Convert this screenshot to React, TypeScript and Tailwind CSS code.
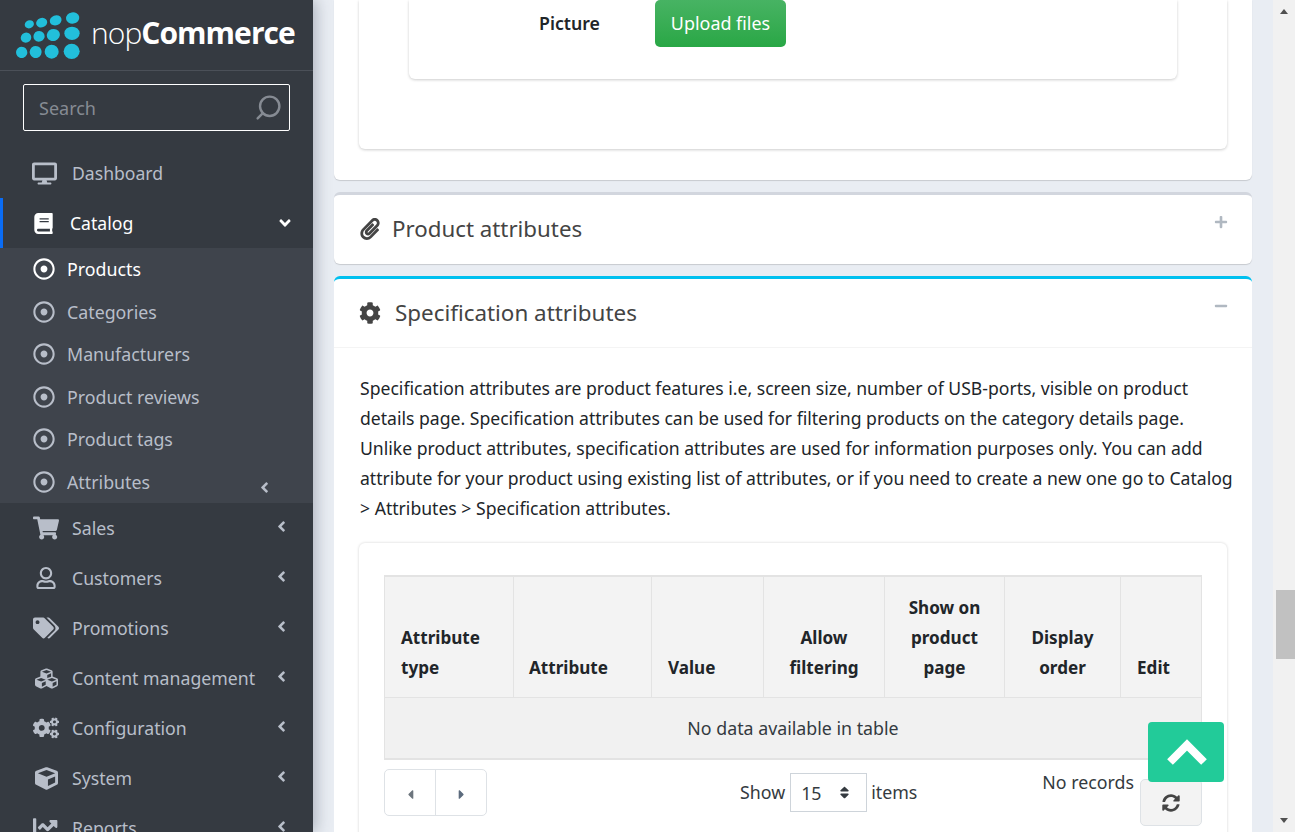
import { Search } from 'lucide-react'
import {
  FaAngleDown,
  FaAngleLeft,
  FaBook,
  FaCaretLeft,
  FaCaretRight,
  FaChartLine,
  FaCog,
  FaCogs,
  FaCube,
  FaCubes,
  FaDesktop,
  FaMinus,
  FaPaperclip,
  FaPlus,
  FaRegDotCircle,
  FaRegUser,
  FaShoppingCart,
  FaSort,
  FaSyncAlt,
  FaTags,
} from 'react-icons/fa'

const subItems = ['Products', 'Categories', 'Manufacturers', 'Product reviews', 'Product tags', 'Attributes']

const menuItems = [
  { label: 'Sales', icon: FaShoppingCart },
  { label: 'Customers', icon: FaRegUser },
  { label: 'Promotions', icon: FaTags },
  { label: 'Content management', icon: FaCubes },
  { label: 'Configuration', icon: FaCogs },
  { label: 'System', icon: FaCube },
  { label: 'Reports', icon: FaChartLine },
]

const Logo = () => (
  <svg viewBox="0 0 330 210" className="h-[70px] w-[110px] shrink-0" fill="#22bfdb">
    <ellipse cx="88" cy="73" rx="14" ry="12" transform="rotate(-20 88 73)" />
    <ellipse cx="125" cy="68" rx="17" ry="14" transform="rotate(-20 125 68)" />
    <ellipse cx="167" cy="61" rx="18" ry="15" transform="rotate(-20 167 61)" />
    <ellipse cx="218" cy="54" rx="20" ry="17" transform="rotate(-10 218 54)" />
    <ellipse cx="78" cy="113" rx="16" ry="15" transform="rotate(-20 78 113)" />
    <ellipse cx="117" cy="109" rx="17" ry="16" transform="rotate(-20 117 109)" />
    <ellipse cx="160" cy="105" rx="20" ry="18" transform="rotate(-20 160 105)" />
    <ellipse cx="216" cy="100" rx="23" ry="20" />
    <ellipse cx="65" cy="157" rx="17" ry="17" transform="rotate(-20 65 157)" />
    <ellipse cx="107" cy="156" rx="18" ry="18" transform="rotate(-20 107 156)" />
    <ellipse cx="155" cy="155" rx="21" ry="21" />
    <ellipse cx="215" cy="154" rx="24" ry="23" />
  </svg>
)

const Sidebar = () => (
  <aside className="relative z-10 flex h-full w-[313px] shrink-0 flex-col overflow-hidden bg-[#353a41] shadow-[3px_0_14px_rgba(60,70,90,0.35)]">
    <div className="flex h-[71px] shrink-0 items-center border-b border-[#4b5058]">
      <Logo />
      <span className="-ml-[19px] -mt-[5px] text-[30px] leading-none tracking-[-0.95px] text-white font-['Open_Sans',sans-serif]">
        <span className="font-light">nop</span>
        <span className="font-bold">Commerce</span>
      </span>
    </div>
    <div className="mx-[23px] mt-[13px] flex h-[47px] shrink-0 items-center justify-between rounded-[2px] border border-white pl-[15px] pr-[6px]">
      <span className="pt-[1px] text-[18px] text-[#868b93]">Search</span>
      <Search size={29} strokeWidth={2} className="-scale-x-100 text-[#868b93]" />
    </div>
    <nav className="mt-[17px]">
      <div className="flex h-[50px] items-center pl-[32px] text-[#b8bec9]">
        <FaDesktop size={25} />
        <span className="ml-[15px] text-[17.6px]">Dashboard</span>
      </div>
      <div className="flex h-[50px] items-center border-l-[3px] border-[#0a6cf5] pl-[30px] pr-[19px] text-white">
        <FaBook size={21} />
        <span className="ml-[16px] flex-1 text-[17.6px]">Catalog</span>
        <FaAngleDown size={18} />
      </div>
      <div className="bg-[#3f444c]">
        {subItems.map((item, i) => (
          <div
            key={item}
            className={`relative flex h-[42.5px] items-center pl-[33px] ${i === 0 ? 'text-white' : 'text-[#b8bec9]'} ${
              i % 2 === 1 ? 'pt-[1px]' : ''
            }`}
          >
            <FaRegDotCircle size={22} />
            <span className="ml-[12px] text-[17.8px]">{item}</span>
            {item === 'Attributes' && <FaAngleLeft size={17} className="absolute left-[256px] top-[18px]" />}
          </div>
        ))}
      </div>
      {menuItems.map(({ label, icon: Icon }) => (
        <div key={label} className="flex h-[50px] items-center pl-[32px] pr-[23px] text-[#b8bec9]">
          <span className="flex w-[28px] justify-center">
            <Icon size={label === 'Customers' ? 22 : label === 'Content management' || label === 'System' ? 23 : 26} />
          </span>
          <span className="ml-[12px] flex-1 text-[17.7px]">{label}</span>
          <FaAngleLeft size={17} className="-mt-[4px]" />
        </div>
      ))}
    </nav>
  </aside>
)

const columns = [
  { lines: ['Attribute', 'type'], width: 129, cls: 'px-[16px] text-left' },
  { lines: ['Attribute'], width: 138, cls: 'px-[15px] text-left' },
  { lines: ['Value'], width: 112, cls: 'px-[16px] text-left' },
  { lines: ['Allow', 'filtering'], width: 121, cls: 'px-[15px] text-center' },
  { lines: ['Show on', 'product', 'page'], width: 120, cls: 'px-[15px] text-center' },
  { lines: ['Display', 'order'], width: 116, cls: 'px-[15px] text-center' },
  { lines: ['Edit'], width: 81, cls: 'px-[16px] text-left' },
]

const SpecTable = () => (
  <table className="w-[817px] table-fixed border-collapse border-t-[2px] border-[#e3e3e3] leading-[30px]">
    <thead>
      <tr className="h-[121px] bg-[#f3f3f3]">
        {columns.map(col => (
          <th
            key={col.lines.join(' ')}
            style={{ width: col.width }}
            className={`border border-t-0 border-[#e3e3e3] pb-[14px] align-bottom text-[17.1px] font-bold text-[#212529] ${col.cls}`}
          >
            {col.lines.map(line => (
              <div key={line}>{line}</div>
            ))}
          </th>
        ))}
      </tr>
    </thead>
    <tbody>
      <tr className="h-[62px] bg-[#f1f1f1]">
        <td colSpan={7} className="border border-b-2 border-[#e3e3e3] text-center text-[17.8px] text-[#343a40]">
          No data available in table
        </td>
      </tr>
    </tbody>
  </table>
)

const Pager = () => (
  <div className="mt-[9px] flex w-[818px] items-start">
    <div className="flex h-[47px] w-[103px] shrink-0 rounded-[5px] border border-[#dee2e6]">
      <span className="flex w-[51px] items-center justify-center border-r border-[#dee2e6] pt-[4px] text-[#6c757d]">
        <FaCaretLeft size={15} />
      </span>
      <span className="flex flex-1 items-center justify-center pt-[4px] text-[#5c6b7d]">
        <FaCaretRight size={15} />
      </span>
    </div>
    <div className="ml-[253px] mt-[4px] flex items-center text-[17.8px] text-[#343a40]">
      <span>Show</span>
      <span className="ml-[5px] mr-[4px] flex h-[39px] w-[77px] items-center justify-between border border-[#ced4da] pl-[10px] pr-[14px]">
        <span className="pt-[2px]">15</span>
        <FaSort size={15} />
      </span>
      <span>items</span>
    </div>
    <span className="ml-[125px] whitespace-nowrap text-[17.8px] text-[#343a40]">No records</span>
    <span className="ml-auto mt-[10px] flex h-[47px] w-[62px] shrink-0 items-center justify-center rounded-[5px] border border-[#dee2e6] bg-[#f3f3f3] text-[#444]">
      <FaSyncAlt size={18} />
    </span>
  </div>
)

const Main = () => (
  <main className="relative h-full flex-1 overflow-hidden bg-[#e9edf3] pl-[21px] pr-[21px]">
    <section className="h-[180px] rounded-b-[6px] bg-white px-[25px] shadow-[0_1px_1px_rgba(0,0,0,0.15)]">
      <div className="h-[149px] rounded-b-[6px] px-[50px] shadow-[0_1px_3px_rgba(0,0,0,0.2)]">
        <div className="h-[79px] rounded-b-[6px] shadow-[0_1px_3px_rgba(0,0,0,0.2)]">
          <div className="flex h-[47px] items-center">
            <span className="ml-[130px] w-[61px] text-[17.7px] font-semibold text-[#212529]">Picture</span>
            <span className="ml-[55px] flex h-[47px] w-[131px] items-center justify-center rounded-[5px] bg-gradient-to-b from-[#47b363] to-[#28a745] text-[17.9px] text-white">
              Upload files
            </span>
          </div>
        </div>
      </div>
    </section>
    <section className="mt-[12px] flex h-[72px] justify-between rounded-[6px] border-t-[3px] border-[#d2d6de] bg-white pl-[25px] pr-[24px] shadow-[0_1px_1px_rgba(0,0,0,0.15)]">
      <div className="flex items-center pb-[1px] text-[#444]">
        <FaPaperclip size={22} />
        <h2 className="ml-[11px] text-[22.3px] font-normal">Product attributes</h2>
      </div>
      <FaPlus size={14} className="mt-[20px] text-[#b0b8c1]" />
    </section>
    <section className="mt-[12px] rounded-t-[6px] border-t-[3px] border-[#00c0ef] bg-white">
      <div className="flex h-[69px] justify-between border-b border-[#f4f4f4] pl-[25px] pr-[24px]">
        <div className="flex items-center pb-[1px] text-[#444]">
          <FaCog size={22} />
          <h2 className="ml-[14px] text-[22.4px] font-normal">Specification attributes</h2>
        </div>
        <FaMinus size={14} className="mt-[20px] text-[#b0b8c1]" />
      </div>
      <p className="mx-[26px] mt-[25px] w-[878px] text-[17.6px] leading-[30px] text-[#212529]">
        Specification attributes are product features i.e, screen size, number of USB-ports, visible on product details
        page. Specification attributes can be used for filtering products on the category details page. Unlike product
        attributes, specification attributes are used for information purposes only. You can add attribute for your
        product using existing list of attributes, or if you need to create a new one go to Catalog &gt; Attributes &gt;
        Specification attributes.
      </p>
      <div className="mx-[25px] mt-[20px] rounded-[6px] px-[25px] pt-[32px] shadow-[0_0_3px_rgba(0,0,0,0.18)]">
        <SpecTable />
        <Pager />
        <div className="h-[20px]" />
      </div>
    </section>
    <div className="absolute left-[835px] top-[722px] flex h-[60px] w-[76px] items-center justify-center rounded-[4px] bg-[#22cb99]">
      <svg viewBox="0 0 40 26" className="ml-[2px] h-[26px] w-[40px]" fill="none" stroke="#fff" strokeWidth="8">
        <polyline points="3,23 20,6 37,23" />
      </svg>
    </div>
  </main>
)

const ScrollBar = () => (
  <div className="relative flex h-full w-[22px] shrink-0 flex-col items-center bg-[#f1f1f1]">
    <span className="mt-[9px] h-0 w-0 border-x-[4px] border-b-[5px] border-x-transparent border-b-[#505050]" />
    <span className="ml-[2px] mt-[576px] h-[69px] w-[19px] bg-[#c1c1c1]" />
    <span className="absolute bottom-[9px] h-0 w-0 border-x-[4px] border-t-[5px] border-x-transparent border-t-[#505050]" />
  </div>
)

export default function App() {
  return (
    <div className="flex h-[832px] w-[1295px] overflow-hidden font-['Noto_Sans',sans-serif]">
      <Sidebar />
      <Main />
      <ScrollBar />
    </div>
  )
}
